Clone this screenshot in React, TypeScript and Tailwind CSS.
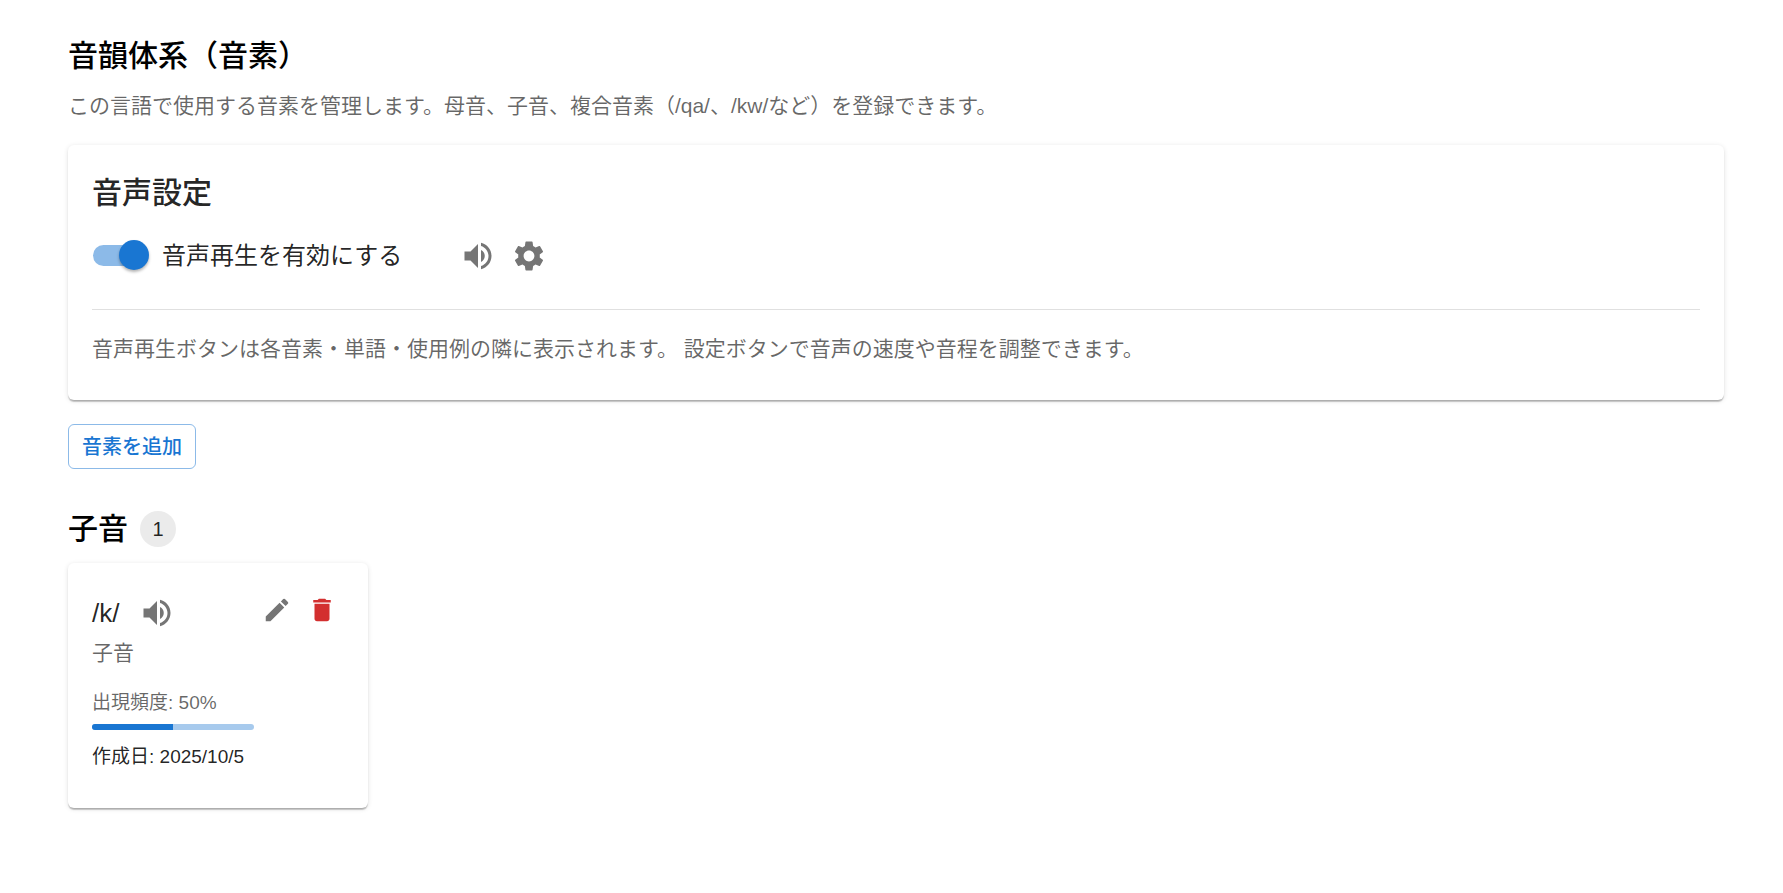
import React, { useState } from "react";
import { MdDelete, MdEdit, MdSettings, MdVolumeUp } from "react-icons/md";

type Phoneme = {
  symbol: string;
  category: string;
  frequency: number;
  createdAt: string;
};

const consonants: Phoneme[] = [
  { symbol: "/k/", category: "子音", frequency: 50, createdAt: "2025/10/5" },
];

const Card: React.FC<{ className?: string; children: React.ReactNode }> = ({
  className = "",
  children,
}) => (
  <div
    className={`rounded-md bg-white px-6 pt-6 pb-9 text-black/87 shadow-[0_3px_2px_-2px_rgba(0,0,0,0.2),0_2px_1px_0_rgba(0,0,0,0.14),0_1px_5px_0_rgba(0,0,0,0.12)] ${className}`}
  >
    {children}
  </div>
);

const IconButton: React.FC<{
  label: string;
  className: string;
  children: React.ReactNode;
}> = ({ label, className, children }) => (
  <button
    type="button"
    aria-label={label}
    className={`flex shrink-0 cursor-pointer items-center justify-center rounded-full hover:bg-black/4 ${className}`}
  >
    {children}
  </button>
);

const VoiceSettings: React.FC = () => {
  const [enabled, setEnabled] = useState(true);

  return (
    <Card>
      <h2 className="text-[30px] leading-12 font-medium">音声設定</h2>
      <div className="mt-[13px] flex items-center gap-[50px]">
        <label className="flex cursor-pointer items-center gap-[18px] text-2xl leading-9">
          <input
            type="checkbox"
            role="switch"
            checked={enabled}
            onChange={(e) => setEnabled(e.target.checked)}
            className="relative ml-px h-[21px] w-[51px] shrink-0 cursor-pointer appearance-none rounded-full bg-black/38 after:absolute after:-top-[5px] after:-left-1 after:size-[30px] after:rounded-full after:bg-white after:shadow-[0_2px_3px_rgba(0,0,0,0.3)] checked:bg-[#8cbae8] checked:after:left-[26px] checked:after:bg-[#1976d2]"
          />
          音声再生を有効にする
        </label>
        <div className="flex text-[#757575]">
          <IconButton label="音声を再生" className="size-[51px]">
            <MdVolumeUp className="size-9" />
          </IconButton>
          <IconButton label="音声の設定" className="size-[51px]">
            <MdSettings className="size-9" />
          </IconButton>
        </div>
      </div>
      <hr className="mt-7 mb-6 border-black/12" />
      <p className="text-[21px] leading-[30px] text-black/60">
        音声再生ボタンは各音素・単語・使用例の隣に表示されます。 設定ボタンで音声の速度や音程を調整できます。
      </p>
    </Card>
  );
};

const PhonemeCard: React.FC<{ phoneme: Phoneme }> = ({ phoneme }) => (
  <Card className="flex w-[300px] items-start justify-between">
    <div>
      <div className="flex items-center gap-3">
        <span className="text-[26px] leading-9">{phoneme.symbol}</span>
        <IconButton label={`${phoneme.symbol}を再生`} className="size-[51px] text-[#757575]">
          <MdVolumeUp className="size-9" />
        </IconButton>
      </div>
      <p className="text-[21px] leading-[30px] text-black/60">{phoneme.category}</p>
      <div className="mt-5 text-[19px] leading-[30px]">
        <p className="text-black/60">出現頻度: {phoneme.frequency}%</p>
        <div
          role="progressbar"
          aria-label="出現頻度"
          aria-valuenow={phoneme.frequency}
          className="mt-1.5 mb-3 h-1.5 w-[162px] overflow-hidden rounded-full bg-[#a7caed]"
        >
          <div className="h-full bg-[#1976d2]" style={{ width: `${phoneme.frequency}%` }} />
        </div>
        <p>作成日: {phoneme.createdAt}</p>
      </div>
    </div>
    <div className="flex">
      <IconButton label="編集" className="size-[45px] text-[#757575]">
        <MdEdit className="size-[30px]" />
      </IconButton>
      <IconButton label="削除" className="size-[45px] text-[#d32f2f]">
        <MdDelete className="size-[30px]" />
      </IconButton>
    </div>
  </Card>
);

const App: React.FC = () => {
  return (
    <main
      lang="ja"
      className="min-h-screen bg-white pt-8 pr-[59px] pb-12 pl-[68px] font-['Liberation_Sans','Noto_Sans_CJK_JP',sans-serif] text-black"
    >
      <h1 className="text-[30px] leading-12 font-medium">音韻体系（音素）</h1>
      <p className="mt-[11px] mb-6 text-[21px] leading-[30px] text-black/60">
        この言語で使用する音素を管理します。母音、子音、複合音素（/qa/、/kw/など）を登録できます。
      </p>
      <VoiceSettings />
      <button
        type="button"
        className="mt-6 h-[45px] cursor-pointer rounded-md border border-[#1976d2]/50 px-[13px] text-xl font-medium text-[#1976d2] hover:bg-[#1976d2]/4"
      >
        音素を追加
      </button>
      <section className="mt-9">
        <div className="mb-2.5 flex items-center gap-3">
          <h2 className="text-[30px] leading-12 font-medium">子音</h2>
          <span className="flex h-9 min-w-9 items-center justify-center rounded-full bg-[#ebebeb] px-3 text-xl text-black/87">
            {consonants.length}
          </span>
        </div>
        <div className="flex flex-wrap gap-6">
          {consonants.map((phoneme) => (
            <PhonemeCard key={phoneme.symbol} phoneme={phoneme} />
          ))}
        </div>
      </section>
    </main>
  );
};

export default App;
